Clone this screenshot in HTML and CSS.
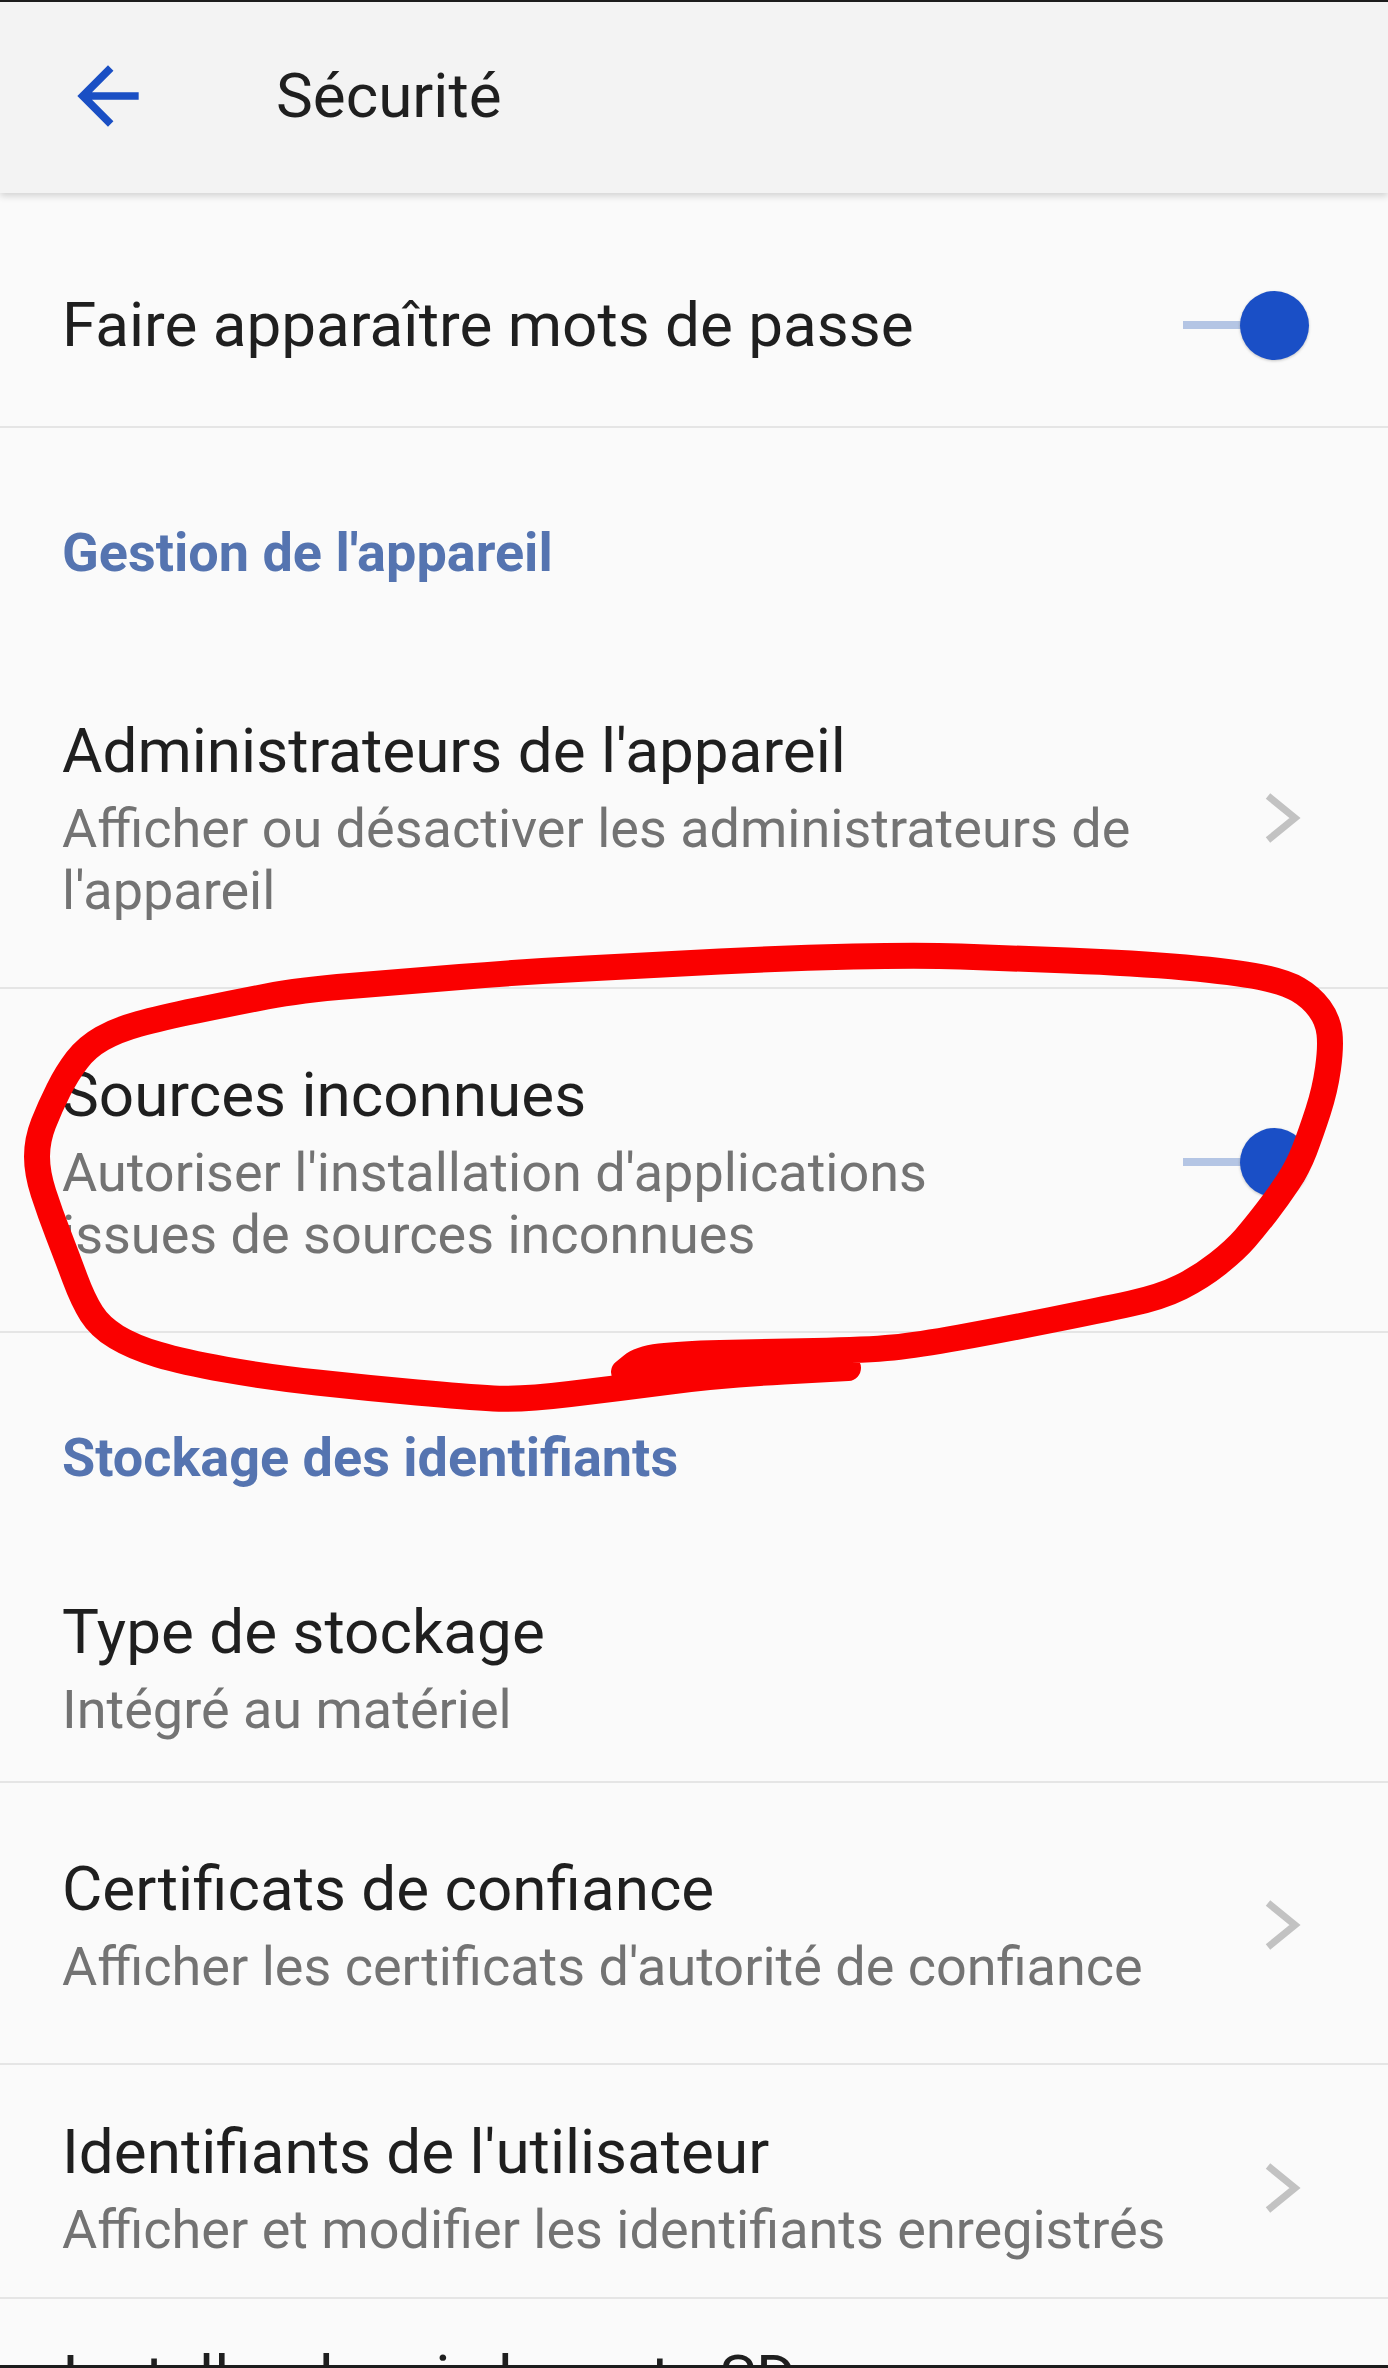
FILE: index.html
```html
<!DOCTYPE html>
<html lang="fr">
<head>
    <meta charset="UTF-8">
    <meta name="viewport" content="width=device-width, initial-scale=1.0">
    <title>Sécurité</title>
    <link rel="stylesheet" href="styles.css">
</head>
<body>
    <div class="screen">
        <header class="toolbar">
            <svg class="back" viewBox="0 0 24 24"><path d="M20 11H7.83l5.59-5.59L12 4l-8 8 8 8 1.41-1.41L7.83 13H20v-2z"/></svg>
            <h1>Sécurité</h1>
        </header>

        <div class="list">
            <div class="item first">
                <div class="text">
                    <div class="title">Faire apparaître mots de passe</div>
                </div>
                <div class="switch"><span class="thumb"></span></div>
            </div>

            <div class="section">Gestion de l'appareil</div>

            <div class="item admin">
                <div class="text">
                    <div class="title">Administrateurs de l'appareil</div>
                    <div class="summary">Afficher ou désactiver les administrateurs de l'appareil</div>
                </div>
                <svg class="chevron" viewBox="0 0 40 56"><polyline points="6,6 33,28 6,50"/></svg>
            </div>

            <div class="item">
                <div class="text">
                    <div class="title">Sources inconnues</div>
                    <div class="summary">Autoriser l'installation d'applications issues de sources inconnues</div>
                </div>
                <div class="switch"><span class="thumb"></span></div>
            </div>

            <div class="section">Stockage des identifiants</div>

            <div class="item storage">
                <div class="text">
                    <div class="title">Type de stockage</div>
                    <div class="summary">Intégré au matériel</div>
                </div>
            </div>

            <div class="item">
                <div class="text">
                    <div class="title">Certificats de confiance</div>
                    <div class="summary">Afficher les certificats d'autorité de confiance</div>
                </div>
                <svg class="chevron" viewBox="0 0 40 56"><polyline points="6,6 33,28 6,50"/></svg>
            </div>

            <div class="item user">
                <div class="text">
                    <div class="title">Identifiants de l'utilisateur</div>
                    <div class="summary">Afficher et modifier les identifiants enregistrés</div>
                </div>
                <svg class="chevron" viewBox="0 0 40 56"><polyline points="6,6 33,28 6,50"/></svg>
            </div>

            <div class="item last">
                <div class="text">
                    <div class="title">Installer depuis la carte SD</div>
                </div>
            </div>
        </div>
    </div>

    <!-- annotation drawn over the screenshot -->
    <svg class="mark" width="1388" height="2368" viewBox="0 0 1388 2368">
        <path d="M624 1372 L632 1365.5 Q640 1359 660 1356.5 Q680 1354 720 1353 Q760 1352 814 1351 Q868 1350 893 1347.5 Q918 1345 959.5 1337.5 Q1001 1330 1051 1320 Q1101 1310 1131 1303.5 Q1161 1297 1181 1287 Q1201 1277 1218 1263.5 Q1235 1250 1245 1238.5 Q1255 1227 1266.5 1212 Q1278 1197 1288 1182 Q1298 1167 1304.5 1150 Q1311 1133 1318 1111.5 Q1325 1090 1328 1068.5 Q1331 1047 1329.5 1033.5 Q1328 1020 1319.5 1008.5 Q1311 997 1298 989.5 Q1285 982 1260 977 Q1235 972 1185 967.5 Q1135 963 1068 960.5 Q1001 958 960.5 956.5 Q920 955 853.5 956.5 Q787 958 720 961.5 Q653 965 586.5 968.5 Q520 972 460 977 Q400 982 350 986 Q300 990 266.5 996.5 Q233 1003 196.5 1010.5 Q160 1018 138.5 1024 Q117 1030 102 1038.5 Q87 1047 77 1060 Q67 1073 58.5 1090 Q50 1107 43.5 1123.5 Q37 1140 37 1156.5 Q37 1173 43.5 1193 Q50 1213 58.5 1235 Q67 1257 75 1278.5 Q83 1300 91.5 1313.5 Q100 1327 116.5 1337 Q133 1347 158 1354.5 Q183 1362 225 1369.5 Q267 1377 317 1382.5 Q367 1388 417 1392.5 Q467 1397 493.5 1398.5 Q520 1400 570 1394 Q620 1388 670 1381.5 Q720 1375 784 1371.5 L848 1368"/>
    </svg>
</body>
</html>
```

FILE: styles.css
```css
*{
    margin: 0;
    padding: 0;
}
body{
    position: relative;
    font-family: Roboto, "Noto Sans", sans-serif;
    background-color: #fafafa;
}
.screen{
    height: 2368px;
    overflow: hidden;
    box-sizing: border-box;
    border-top: 2px solid #1c1c1c;
    border-bottom: 3px solid #1c1c1c;
    background-color: #fafafa;
}

/* barre du haut */
.toolbar{
    position: relative;
    z-index: 1;
    display: flex;
    align-items: center;
    height: 191px;
    box-sizing: border-box;
    padding: 0 0 4px 62px;
    background-color: #f3f3f3;
    box-shadow: 0 3px 7px rgba(0, 0, 0, 0.16);
}
.toolbar .back{
    width: 92px;
    height: 92px;
    fill: #1a4fc4;
}
.toolbar h1{
    margin-left: 122px;
    font-size: 62px;
    line-height: 74px;
    font-weight: 400;
    color: #1f1f1f;
}

/* liste */
.section{
    padding: 94px 62px 0;
    font-size: 54px;
    line-height: 62px;
    font-weight: 700;
    color: #5574b0;
}
.item{
    display: flex;
    align-items: center;
    padding: 69px 79px 65px 62px;
    border-bottom: 2px solid #e5e5e5;
}
.item.first{
    padding-top: 95px;
    padding-bottom: 64px;
}
.item.admin{
    padding-top: 130px;
}
.item.storage{
    padding-top: 106px;
    padding-bottom: 40px;
}
.item.user{
    padding-top: 50px;
    padding-bottom: 36px;
}
.item.last{
    padding-top: 42px;
    border-bottom: none;
}
.item .text{
    flex: 1;
    min-width: 0;
}
.item .title{
    font-size: 62px;
    line-height: 74px;
    color: #1f1f1f;
}
.item .summary{
    margin-top: 10px;
    font-size: 54px;
    line-height: 62px;
    color: #737373;
}

/* interrupteur */
.switch{
    position: relative;
    flex: none;
    width: 126px;
    height: 69px;
    margin-left: 120px;
}
.switch::before{
    content: "";
    position: absolute;
    left: 0;
    right: 30px;
    top: 30px;
    height: 8px;
    background-color: #b4c5e4;
}
.switch .thumb{
    position: absolute;
    right: 0;
    top: 0;
    width: 69px;
    height: 69px;
    border-radius: 50%;
    background-color: #1a4fc6;
    box-shadow: 0 1px 3px rgba(0, 0, 0, 0.22);
}

.chevron{
    flex: none;
    width: 40px;
    height: 56px;
    margin: 0 7px 0 40px;
}
.chevron polyline{
    fill: none;
    stroke: #c2c2c2;
    stroke-width: 7;
}

/* trait rouge */
.mark{
    position: absolute;
    top: 0;
    left: 0;
    pointer-events: none;
}
.mark path{
    fill: none;
    stroke: #fa0000;
    stroke-width: 26;
    stroke-linecap: round;
    stroke-linejoin: round;
}
```
